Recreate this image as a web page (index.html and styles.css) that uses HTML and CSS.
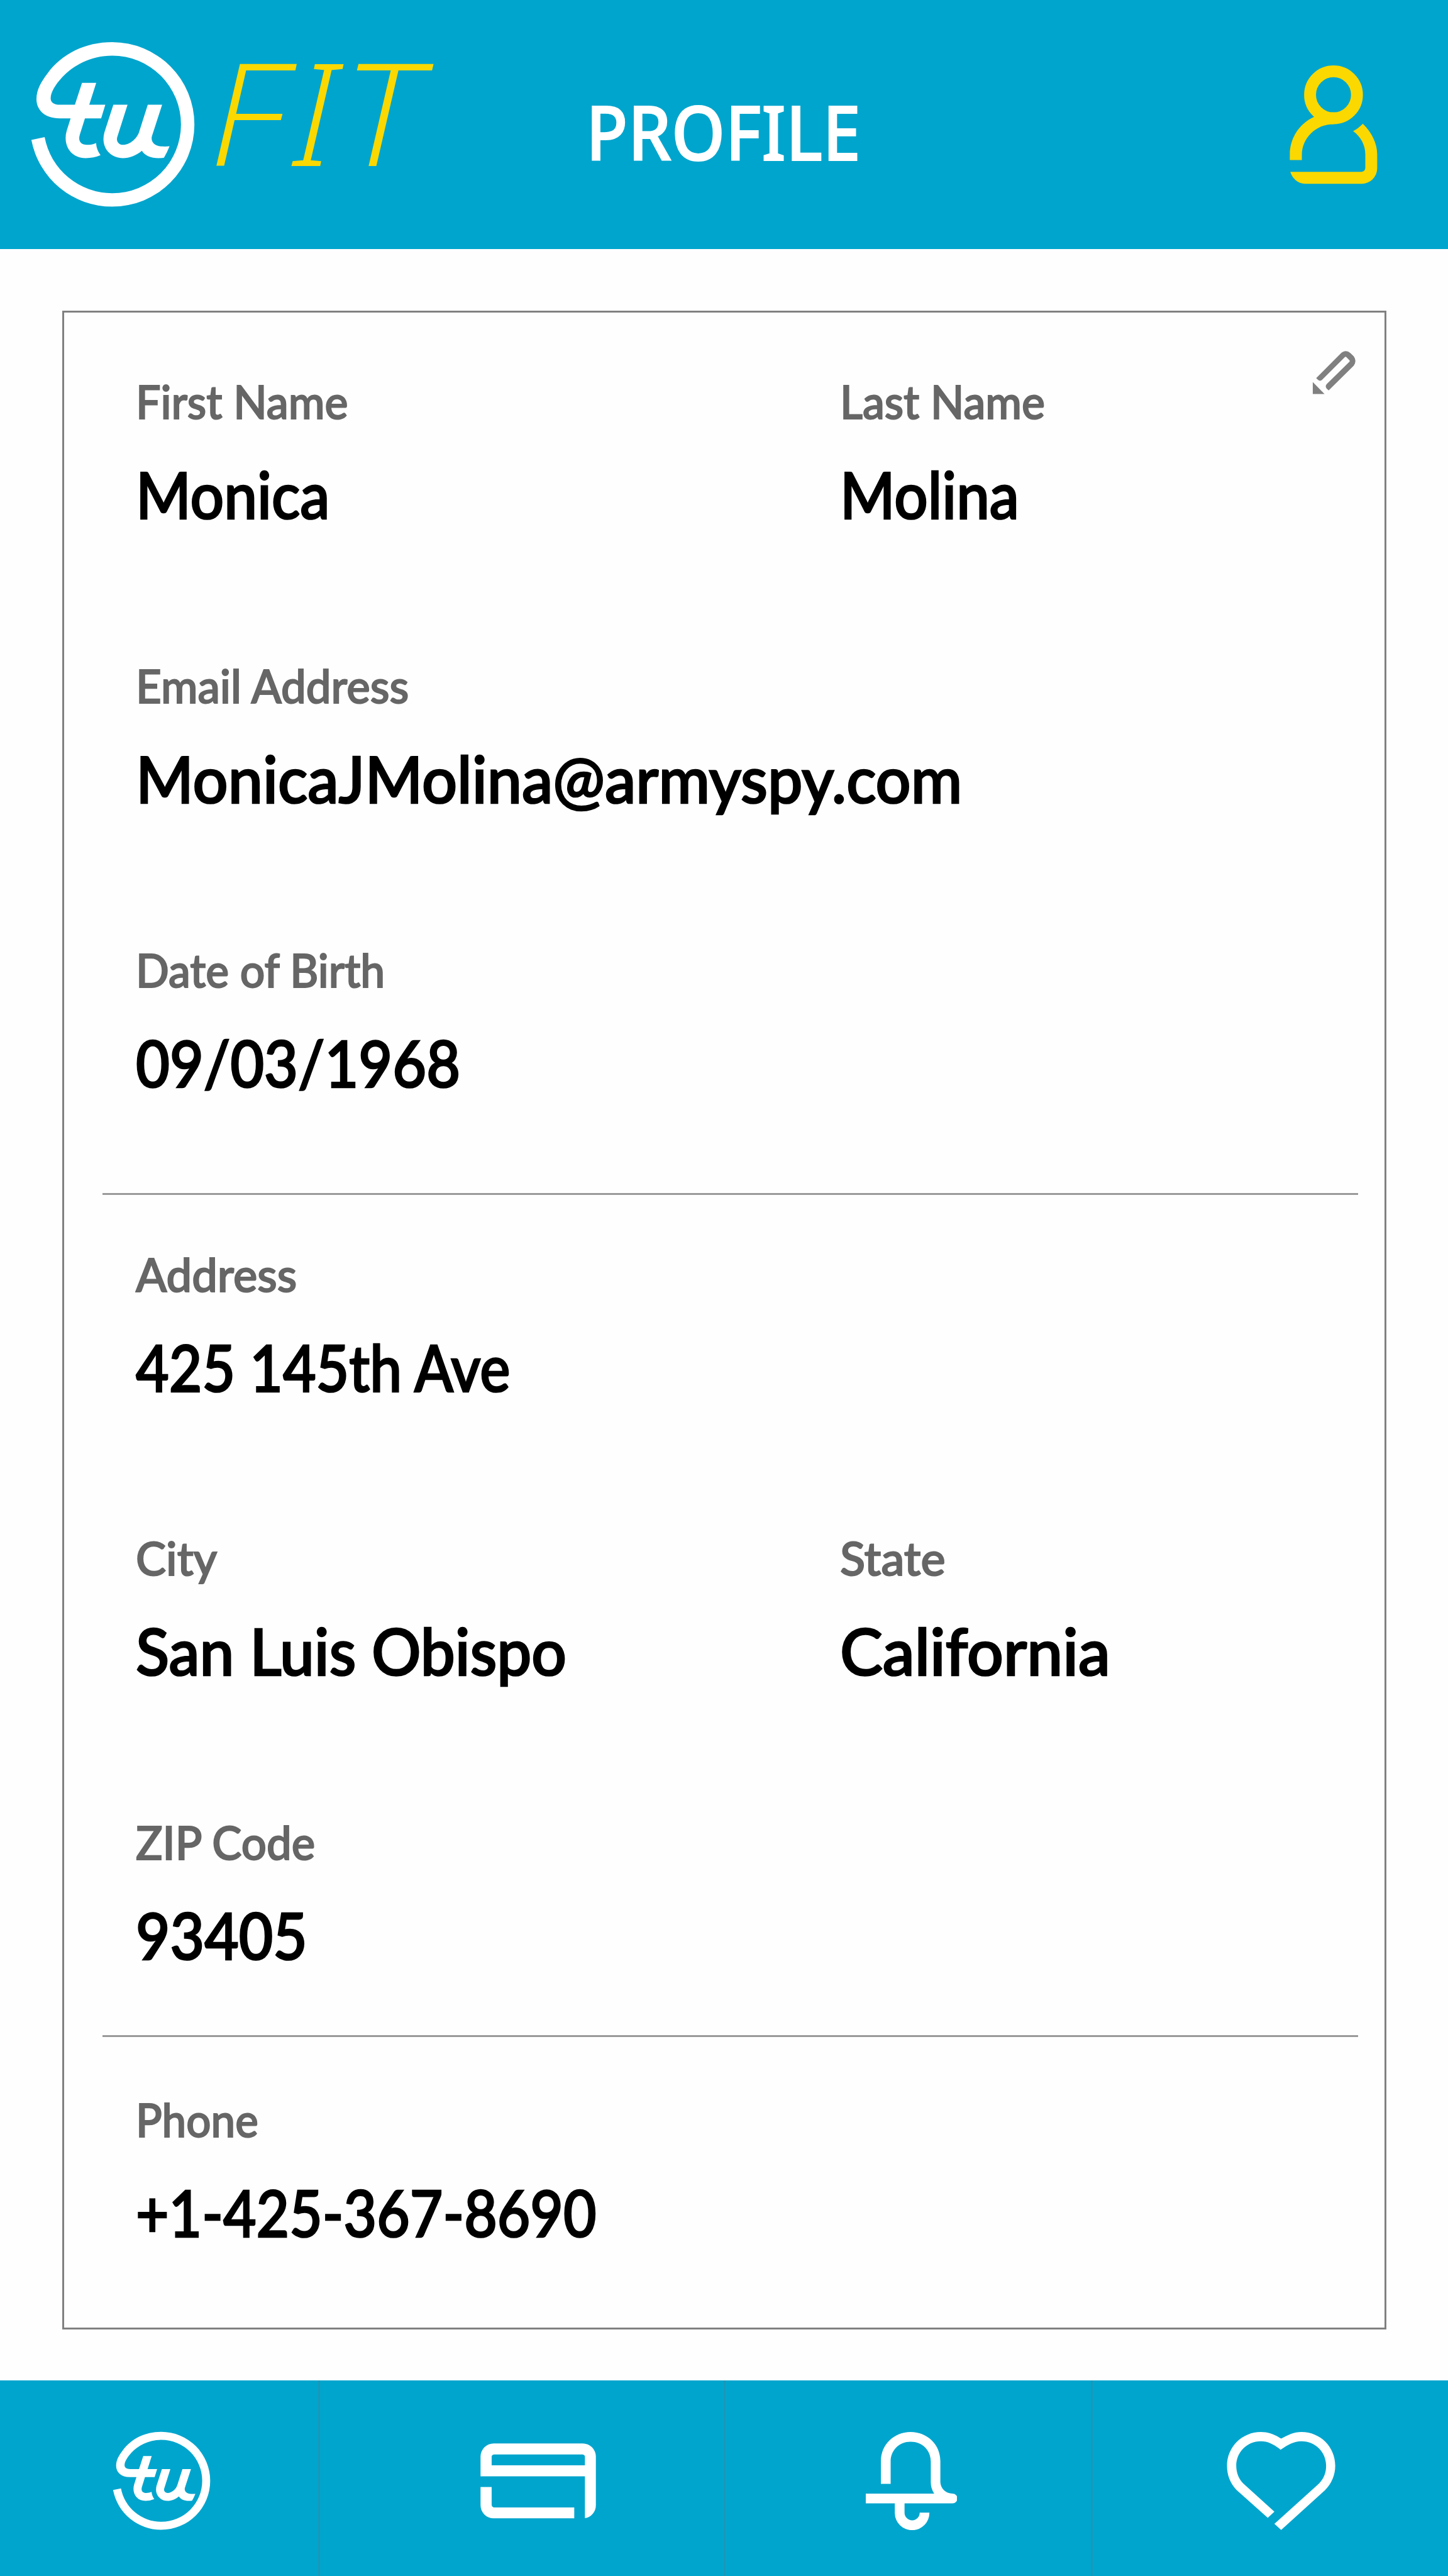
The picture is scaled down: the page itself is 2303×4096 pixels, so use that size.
FILE: index.html
```html
<!DOCTYPE html>
<html lang="en">
<head>
<meta charset="utf-8">
<title>tuFIT Profile</title>
<link rel="stylesheet" href="styles.css">
</head>
<body>
<svg class="sprite" aria-hidden="true">
  <symbol id="tu-mark" viewBox="0 0 1260 1260">
    <path d="M81 727L167 709A445 445 0 0 0 605 1072A445 445 0 0 0 1050 627A445 445 0 0 0 605 181C465 181 350 246 280 322C236 370 206 420 206 457C206 485 228 499 265 499H363L409 357H501L456 499H560L533 587H428L395 692C382 735 402 759 440 759Q475 759 500 747Q503 790 529 826Q485 845 433 845C350 845 303 785 303 715Q303 690 310 667L335 587H265C165 587 114 530 114 463C114 400 145 350 185 297C280 168 430 94 605 94A532 532 0 0 1 1137 627A532 532 0 0 1 605 1159A532 532 0 0 1 81 727Z"/>
    <path d="M612 499H704L638 707C628 735 648 759 675 759C720 759 768 715 780 672L835 499H928L862 703C853 735 875 769 930 769Q955 770 976 768Q962 805 940 842Q925 845 905 845C855 845 815 828 797 797C760 828 715 845 675 845C600 845 548 790 548 722Q548 700 554 678Z"/>
  </symbol>
</svg>

<div class="screen">
  <header class="header">
    <svg class="header-mark"><use href="#tu-mark"/></svg>
    <div class="brand"><span>FIT</span></div>
    <h1 class="title"><span>PROFILE</span></h1>
    <svg class="header-user" viewBox="0 0 900 960">
      <circle cx="415" cy="284" r="152" fill="none" stroke="currentColor" stroke-width="77"/>
      <path d="M132 707V670C132 565 195 470 289 427L415 397V475C300 475 210 565 210 675V707Z"/>
      <path d="M605 471C665 530 698 600 698 670V760A100 100 0 0 1 598 860H232C185 860 148 826 135 783H596Q621 780 621 757V670C621 610 592 555 542 519Q575 502 605 471Z"/>
    </svg>
  </header>

  <main class="card">
    <svg class="edit" viewBox="150 340 300 300">
      <path d="M184 528L343 369Q374 340 406 366L427 387Q449 417 427 448L265 608L252 596Q240 580 252 567L400 421Q403 417 400 413L379 392Q374 388 370 392L221 541Q209 550 197 541Z"/>
      <path d="M162 554L238 631H162Z"/>
    </svg>

    <section class="group">
      <div class="row">
        <div class="field first-name"><span class="label">First Name</span><span class="value">Monica</span></div>
        <div class="field last-name"><span class="label">Last Name</span><span class="value">Molina</span></div>
      </div>
      <div class="row">
        <div class="field email"><span class="label">Email Address</span><span class="value">MonicaJMolina@armyspy.com</span></div>
      </div>
      <div class="row">
        <div class="field birth"><span class="label">Date of Birth</span><span class="value">09/03/1968</span></div>
      </div>
    </section>

    <section class="group group-address">
      <div class="row">
        <div class="field address"><span class="label">Address</span><span class="value">425 145th Ave</span></div>
      </div>
      <div class="row">
        <div class="field city"><span class="label">City</span><span class="value">San Luis Obispo</span></div>
        <div class="field state"><span class="label">State</span><span class="value">California</span></div>
      </div>
      <div class="row">
        <div class="field zip"><span class="label">ZIP Code</span><span class="value">93405</span></div>
      </div>
    </section>

    <section class="group group-phone">
      <div class="row">
        <div class="field phone"><span class="label">Phone</span><span class="value">+1-425-367-8690</span></div>
      </div>
    </section>
  </main>

  <nav class="tabs">
    <a class="tab tab-home"><svg><use href="#tu-mark"/></svg></a>
    <a class="tab tab-card"><svg viewBox="109 98 749 487">
      <path fill-rule="evenodd" d="M110 312V183A85 85 0 0 1 195 99H772A85 85 0 0 1 857 183V498A85 85 0 0 1 786 583V312ZM182 241H786V184Q784 172 771 170H197Q184 172 182 184Z"/>
      <path d="M110 381H182V497Q184 511 197 513H717V584H195A85 85 0 0 1 110 498Z"/>
    </svg></a>
    <a class="tab tab-bell"><svg viewBox="86 84 592 636">
      <path d="M184 420V272C184 165 270 84 376 84C484 84 569 165 569 272V405C569 450 605 483 648 483A31 31 0 0 1 648 546H337V608A49 49 0 0 0 435 606H498A112 112 0 0 1 274 610V546H86V483H529Q507 450 507 410V275C507 200 450 147 376 147C305 147 247 200 247 275V420Z"/>
    </svg></a>
    <a class="tab tab-heart"><svg viewBox="84 84 704 636">
      <path d="M437 127C480 103 520 84 568 84C690 84 787 180 787 303C787 365 762 420 720 462L437 718L393 679L682 418C712 387 728 350 728 303C728 215 660 144 568 144C520 144 480 167 433 199C395 168 355 144 305 144C215 144 146 215 146 303C146 348 163 390 192 418L393 600L350 640L148 460C108 418 86 365 86 303C86 180 185 84 305 84C355 84 400 103 437 127Z"/>
    </svg></a>
  </nav>
</div>
</body>
</html>
```
FILE: styles.css
```css
* { box-sizing: border-box; }
body { margin: 0; background: #fefefe; }
svg { display: block; fill: currentColor; flex: none; }
.sprite { position: absolute; width: 0; height: 0; }

.screen {
  width: 2303px;
  height: 4096px;
  display: flex;
  flex-direction: column;
  overflow: hidden;
  font-family: Lato, sans-serif;
}

.header {
  height: 396px;
  flex: none;
  display: flex;
  align-items: flex-start;
  background: #00a5cd;
  color: #fff;
}
.header-mark { width: 309.4px; height: 309.4px; margin: 44px 0 0 29.5px; }
.brand {
  width: 586px;
  margin: 27px 0 0 -5px;
  color: #fad800;
  font: italic 200 223px/300px "Noto Sans", sans-serif;
  letter-spacing: 11px;
  -webkit-text-stroke: 2.2px #fad800;
}
.title {
  width: 1099px;
  margin: 129px 0 0 12px;
  font: 500 120px/160px "Noto Sans", sans-serif;
  -webkit-text-stroke: 1.8px #fff;
}
.brand span, .title span { display: inline-block; transform-origin: 0 0; white-space: nowrap; }
.brand span { transform: scaleX(1.095); }
.title span { transform: scaleX(0.911); }
.header-user { width: 221px; height: 235.7px; margin-top: 81px; margin-left: -12px; color: #fad800; }

.card {
  position: relative;
  width: 2106px;
  height: 3210px;
  flex: none;
  margin: 98px 0 0 99px;
  padding: 96px 42px 0 61px;
  border: 3px solid #808080;
}
.edit { position: absolute; top: 58px; right: 43px; width: 73.7px; height: 73.7px; color: #808080; }

.group { display: flex; flex-direction: column; gap: 196.8px; padding-left: 53px; }
.group-address { margin-top: 145px; padding-top: 81px; border-top: 3px solid #999; }
.group-phone { margin-top: 97px; padding-top: 86px; border-top: 3px solid #999; }
.row { display: grid; grid-template-columns: 1120px 1fr; }
.field { display: flex; flex-direction: column; align-items: flex-start; gap: 40px; }
.label, .value { display: block; white-space: nowrap; transform-origin: 0 0; font-weight: 500; }
.label {
  color: #666;
  font-size: 74px;
  line-height: 90px;
  -webkit-text-stroke: 2px #666;
  transform: scaleX(var(--label-width));
}
.value {
  color: #000;
  font-size: 102.5px;
  line-height: 125px;
  -webkit-text-stroke: 2.7px #000;
  transform: scaleX(var(--value-width));
}

/* Condensed widths per field */
.first-name { --label-width: 0.945; --value-width: 0.921; }
.last-name { --label-width: 0.943; --value-width: 0.918; }
.email { --label-width: 0.957; --value-width: 0.963; }
.birth { --label-width: 0.94; --value-width: 0.907; }
.address { --label-width: 0.978; --value-width: 0.887; }
.city { --label-width: 0.975; --value-width: 0.956; }
.state { --label-width: 1; --value-width: 0.993; }
.zip { --label-width: 0.955; --value-width: 0.918; }
.phone { --label-width: 0.934; --value-width: 0.885; }

.tabs { display: flex; height: 311px; flex: none; margin-top: 81px; background: #00a5cd; color: #fff; }
.tab { border-right: 3px solid #1a97b8; }
.tab-home { width: 509px; padding: 68px 0 0 168.4px; }
.tab-home svg { width: 184.3px; height: 184.3px; }
.tab-card { width: 645px; padding: 100px 0 0 254.5px; }
.tab-card svg { width: 184px; height: 119.6px; }
.tab-bell { width: 584px; padding: 82px 0 0 222.7px; }
.tab-bell svg { width: 145.4px; height: 156.2px; }
.tab-heart { flex: 1; border-right: 0; padding: 82px 0 0 212.8px; }
.tab-heart svg { width: 172.9px; height: 156.2px; }
```
